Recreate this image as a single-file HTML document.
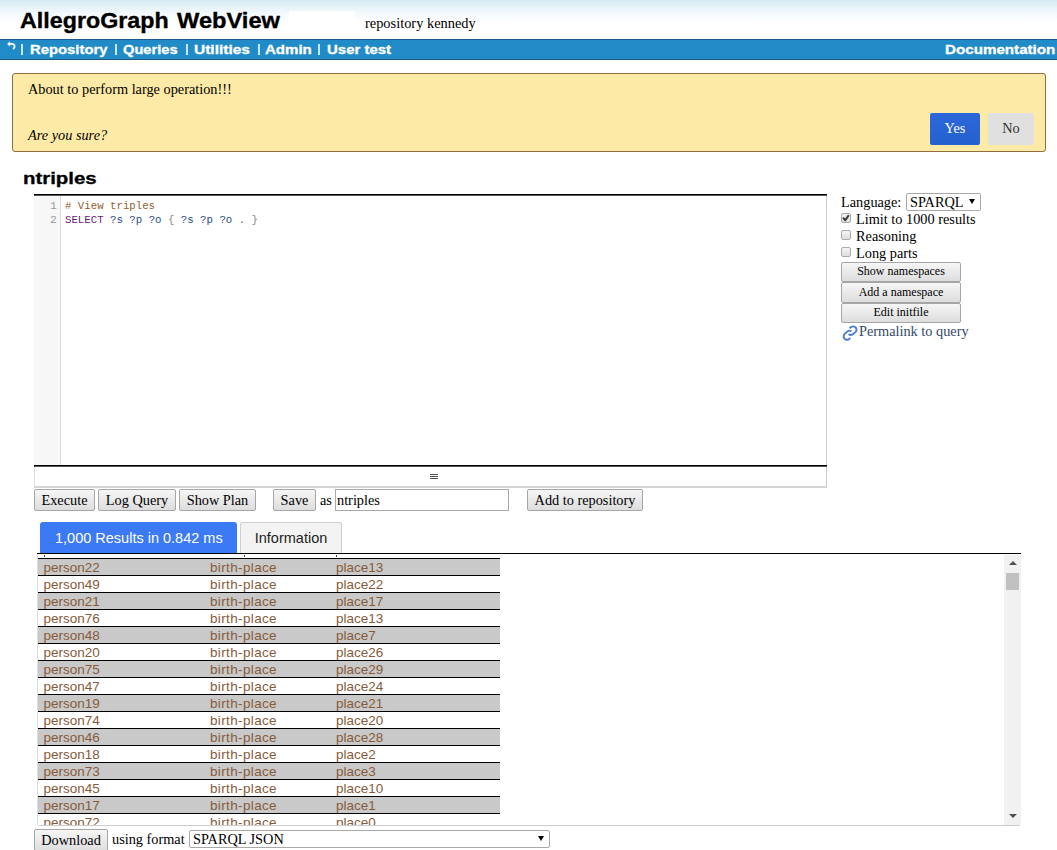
<!DOCTYPE html>
<html><head><meta charset="utf-8">
<style>
*{box-sizing:border-box;margin:0;padding:0}
html,body{width:1057px;height:850px;overflow:hidden;background:#fff;position:relative}
body{font-family:"Liberation Serif",serif;font-size:14.3px;color:#000}
.a{position:absolute;white-space:nowrap}
.sans{font-family:"Liberation Sans",sans-serif}
.mono{font-family:"Liberation Mono",monospace}
#hdr{position:absolute;left:0;top:0;width:1057px;height:39px;background:linear-gradient(#d5e9f3 0px,#e3f1f8 6px,#f5fafd 14px,#fff 22px)}
#nav{position:absolute;left:0;top:39px;width:1057px;height:21px;background:#218bc8;border-top:1px solid #1b5889;border-bottom:1px solid #1b5889}
.nv{position:absolute;top:1px;line-height:19px;font-family:"Liberation Sans",sans-serif;font-weight:bold;font-size:14px;color:#fff;white-space:nowrap;-webkit-text-stroke:0.3px #fff}
#alert{position:absolute;left:12px;top:73px;width:1034px;height:79px;background:#fdeaa6;border:1px solid #8f6e3a;border-radius:3px}
.btn{position:absolute;background:linear-gradient(#f6f6f6,#dddddd);border:1px solid #a6a6a6;border-radius:2px;text-align:center;white-space:nowrap;color:#000}
.chk{position:absolute;width:10px;height:10px;border:1px solid #ababab;border-radius:2px;background:linear-gradient(#f4f4f4,#dedede)}
.row{position:absolute;left:38px;width:462px;height:16px;font-family:"Liberation Sans",sans-serif;font-size:13.5px;color:#875b3a;line-height:16px}
.row span{position:absolute;top:1px}
.ln{position:absolute;left:38px;width:462px;height:1px;background:#000}
</style></head><body>
<div id="hdr"></div>
<div class="a sans" style="left:20px;top:8px;font-weight:bold;font-size:22px;line-height:26px;-webkit-text-stroke:0.35px #000;transform:scaleX(1.058);transform-origin:0 0">AllegroGraph</div><div class="a sans" style="left:176.5px;top:8px;font-weight:bold;font-size:22px;line-height:26px;-webkit-text-stroke:0.35px #000;transform:scaleX(1.075);transform-origin:0 0">WebView</div>
<div class="a" style="left:289px;top:11px;width:66px;height:26px;background:#fff;border-radius:2px"></div>
<div class="a" style="left:365px;top:13.5px;font-size:14.4px;line-height:18px">repository kennedy</div>

<div id="nav">
  <svg class="a" style="left:4px;top:0px" width="14" height="12" viewBox="0 0 14 12"><path d="M3.2 3.9 L5.8 1.2 L5.8 6.6 Z" fill="#fff"/><path d="M5.5 3.9 H7.4 Q10.6 4 10.6 6.2 Q10.6 7.6 9.6 8.6" fill="none" stroke="#fff" stroke-width="1.7" stroke-linecap="round"/></svg>
  <div class="a" style="left:21px;top:4px;width:2px;height:11px;background:#d8f0ff;opacity:.9"></div>
  <div class="a" style="left:114.6px;top:4px;width:2px;height:11px;background:#d8f0ff;opacity:.9"></div>
  <div class="a" style="left:186px;top:4px;width:2px;height:11px;background:#d8f0ff;opacity:.9"></div>
  <div class="a" style="left:258px;top:4px;width:2px;height:11px;background:#d8f0ff;opacity:.9"></div>
  <div class="a" style="left:318px;top:4px;width:2px;height:11px;background:#d8f0ff;opacity:.9"></div>
  <div class="nv" style="left:30.0px;font-size:12.6px;transform:scaleX(1.178);transform-origin:0 0">Repository</div>
  <div class="nv" style="left:123.4px;font-size:12.6px;transform:scaleX(1.164);transform-origin:0 0">Queries</div>
  <div class="nv" style="left:194.0px;font-size:12.6px;transform:scaleX(1.231);transform-origin:0 0">Utilities</div>
  <div class="nv" style="left:265.0px;font-size:12.6px;transform:scaleX(1.195);transform-origin:0 0">Admin</div>
  <div class="nv" style="left:327.0px;font-size:12.6px;transform:scaleX(1.188);transform-origin:0 0">User test</div>
  <div class="nv" style="left:945.4px;font-size:12.6px;transform:scaleX(1.204);transform-origin:0 0">Documentation</div>
</div>

<div id="alert"></div>
<div class="a" style="left:28px;top:80px;font-size:14.3px;line-height:18px">About to perform large operation!!!</div>
<div class="a" style="left:28px;top:126px;font-size:14.3px;line-height:18px;font-style:italic">Are you sure?</div>
<div class="a" style="left:930px;top:113px;width:50px;height:32px;background:linear-gradient(#2c68da,#2560d0);border-radius:2px;color:#fff;font-size:14.3px;line-height:30px;text-align:center">Yes</div>
<div class="a" style="left:988px;top:113px;width:46px;height:32px;background:#e0e0e0;border-radius:2px;color:#333;font-size:14.3px;line-height:30px;text-align:center">No</div>

<div class="a sans" style="left:22.5px;top:168px;font-weight:bold;font-size:16.5px;line-height:20px;transform:scaleX(1.235);transform-origin:0 0;-webkit-text-stroke:0.3px #000">ntriples</div>

<!-- editor -->
<div class="a" style="left:34px;top:194px;width:793px;height:294px;border-right:1px solid #c8c8c8;border-left:1px solid #ddd"></div>
<div class="a" style="left:34px;top:194px;width:793px;height:1px;background:#000"></div>
<div class="a" style="left:34px;top:195px;width:793px;height:1px;background:#555"></div>
<div class="a" style="left:34px;top:196px;width:27px;height:269px;background:#f7f7f7;border-right:1px solid #ddd"></div>
<div class="a" style="left:34px;top:465px;width:793px;height:1px;background:#000"></div>
<div class="a" style="left:34px;top:466px;width:793px;height:1px;background:#555"></div>
<div class="a" style="left:34px;top:486px;width:793px;height:2px;background:#d4d4d4"></div>
<div class="a" style="left:430px;top:474px;width:8px;height:1px;background:#555"></div>
<div class="a" style="left:430px;top:476px;width:8px;height:1px;background:#555"></div>
<div class="a" style="left:430px;top:478px;width:8px;height:1px;background:#555"></div>
<div class="a mono" style="left:34px;top:199px;width:23px;text-align:right;font-size:11.5px;line-height:14px;color:#999">1<br>2</div>
<div class="a mono" style="left:64.6px;top:199px;font-size:11.5px;line-height:14px;transform:scaleX(0.932);transform-origin:0 0"><span style="color:#94602e">#&nbsp;View&nbsp;triples</span><br><span style="color:#6a1b7a">SELECT</span> <span style="color:#2b4c8c">?s ?p ?o</span> <span style="color:#888">{</span> <span style="color:#2b4c8c">?s ?p ?o</span> <span style="color:#666">.</span> <span style="color:#888">}</span></div>

<!-- right panel -->
<div class="a" style="left:841px;top:194px;line-height:16px">Language:</div>
<div class="a" style="left:906px;top:193px;width:75px;height:18px;border:1px solid #a9a9a9;border-radius:2px;background:#fff"></div>
<div class="a" style="left:910px;top:194px;line-height:16px">SPARQL</div>
<div class="a" style="left:969px;top:199px;width:0;height:0;border-left:3px solid transparent;border-right:3px solid transparent;border-top:5px solid #000"></div>
<div class="chk" style="left:841px;top:213px"></div>
<svg class="a" style="left:841px;top:213px" width="10" height="10" viewBox="0 0 10 10"><path d="M2.5 5.3 L4.3 7.2 L7.3 2.9" fill="none" stroke="#3a3a3a" stroke-width="2" stroke-linecap="round" stroke-linejoin="round"/></svg>
<div class="a" style="left:856px;top:211px;line-height:16px">Limit to 1000 results</div>
<div class="chk" style="left:841px;top:230px"></div>
<div class="a" style="left:856px;top:228px;line-height:16px">Reasoning</div>
<div class="chk" style="left:841px;top:247px"></div>
<div class="a" style="left:856px;top:245px;line-height:16px">Long parts</div>
<div class="btn" style="left:841px;top:262px;width:120px;height:20px;font-size:12px;line-height:17px">Show namespaces</div>
<div class="btn" style="left:841px;top:282px;width:120px;height:21px;font-size:12px;line-height:19px">Add a namespace</div>
<div class="btn" style="left:841px;top:303px;width:120px;height:20px;font-size:12px;line-height:17px">Edit initfile</div>
<svg class="a" style="left:840px;top:323px" width="20" height="20" viewBox="0 0 20 20"><g fill="none" stroke="#4f7fd2" stroke-width="1.9" stroke-linecap="butt"><path d="M9.6 5.3 L11.3 3.9 Q13.4 2.7 15.6 4.4 Q17.3 6.6 15.9 8.6 L12.6 11.4 Q10.5 12.7 8.6 11.0"/><path d="M11.4 8.4 Q9.5 6.9 7.4 8.4 L4.4 11.2 Q2.8 13.5 4.5 15.8 Q6.7 17.6 9.0 16.1 L10.3 14.9"/></g></svg>
<div class="a" style="left:859px;top:323.3px;line-height:16px;color:#34486a">Permalink to query</div>

<!-- buttons row -->
<div class="btn" style="left:34px;top:489px;width:61px;height:22px;line-height:20px">Execute</div>
<div class="btn" style="left:98px;top:489px;width:78px;height:22px;line-height:20px">Log Query</div>
<div class="btn" style="left:179px;top:489px;width:77px;height:22px;line-height:20px">Show Plan</div>
<div class="btn" style="left:273px;top:489px;width:43px;height:22px;line-height:20px">Save</div>
<div class="a" style="left:320px;top:492px;line-height:16px">as</div>
<div class="a" style="left:335px;top:489px;width:174px;height:22px;border:1px solid #a9a9a9;background:#fff;padding-left:1px;line-height:20px">ntriples</div>
<div class="btn" style="left:527px;top:489px;width:116px;height:22px;line-height:20px">Add to repository</div>

<!-- tabs -->
<div class="a sans" style="left:40px;top:522px;width:197px;height:32px;background:#3b7af4;border-radius:3px 3px 0 0;color:#fff;font-size:14.5px;line-height:32px;padding-left:15px">1,000 Results in 0.842 ms</div>
<div class="a sans" style="left:240px;top:522px;width:102px;height:32px;background:#f3f3f3;border:1px solid #d0d0d0;border-bottom:none;border-radius:3px 3px 0 0;color:#222;font-size:14.5px;line-height:31px;text-align:center">Information</div>
<div class="a" style="left:37px;top:553px;width:984px;height:1px;background:#000"></div>

<!-- results container -->
<div class="a" style="left:37px;top:554px;width:984px;height:272px;border-left:1px solid #ddd;border-bottom:1px solid #ccc;border-radius:0 0 3px 3px;overflow:hidden" id="res">
</div>
<div class="a" style="left:37px;top:554px;width:967px;height:271px;overflow:hidden">
<div class="a" style="left:7px;top:1px;width:1px;height:2px;background:#444"></div>
<div class="a" style="left:207px;top:1px;width:1px;height:2px;background:#444"></div>
<div class="a" style="left:299px;top:1px;width:1px;height:2px;background:#444"></div>
<div class="a" style="left:1px;top:4px;width:462px;height:1px;background:#000"></div>
<div class="row" style="left:1px;top:5px;background:#c9c9c9"><span style="left:5.5px">person22</span><span style="left:172px;letter-spacing:0.36px">birth-place</span><span style="left:298px">place13</span></div>
<div class="a" style="left:1px;top:21px;width:462px;height:1px;background:#000"></div>
<div class="row" style="left:1px;top:22px;background:#fff"><span style="left:5.5px">person49</span><span style="left:172px;letter-spacing:0.36px">birth-place</span><span style="left:298px">place22</span></div>
<div class="a" style="left:1px;top:38px;width:462px;height:1px;background:#000"></div>
<div class="row" style="left:1px;top:39px;background:#c9c9c9"><span style="left:5.5px">person21</span><span style="left:172px;letter-spacing:0.36px">birth-place</span><span style="left:298px">place17</span></div>
<div class="a" style="left:1px;top:55px;width:462px;height:1px;background:#000"></div>
<div class="row" style="left:1px;top:56px;background:#fff"><span style="left:5.5px">person76</span><span style="left:172px;letter-spacing:0.36px">birth-place</span><span style="left:298px">place13</span></div>
<div class="a" style="left:1px;top:72px;width:462px;height:1px;background:#000"></div>
<div class="row" style="left:1px;top:73px;background:#c9c9c9"><span style="left:5.5px">person48</span><span style="left:172px;letter-spacing:0.36px">birth-place</span><span style="left:298px">place7</span></div>
<div class="a" style="left:1px;top:89px;width:462px;height:1px;background:#000"></div>
<div class="row" style="left:1px;top:90px;background:#fff"><span style="left:5.5px">person20</span><span style="left:172px;letter-spacing:0.36px">birth-place</span><span style="left:298px">place26</span></div>
<div class="a" style="left:1px;top:106px;width:462px;height:1px;background:#000"></div>
<div class="row" style="left:1px;top:107px;background:#c9c9c9"><span style="left:5.5px">person75</span><span style="left:172px;letter-spacing:0.36px">birth-place</span><span style="left:298px">place29</span></div>
<div class="a" style="left:1px;top:123px;width:462px;height:1px;background:#000"></div>
<div class="row" style="left:1px;top:124px;background:#fff"><span style="left:5.5px">person47</span><span style="left:172px;letter-spacing:0.36px">birth-place</span><span style="left:298px">place24</span></div>
<div class="a" style="left:1px;top:140px;width:462px;height:1px;background:#000"></div>
<div class="row" style="left:1px;top:141px;background:#c9c9c9"><span style="left:5.5px">person19</span><span style="left:172px;letter-spacing:0.36px">birth-place</span><span style="left:298px">place21</span></div>
<div class="a" style="left:1px;top:157px;width:462px;height:1px;background:#000"></div>
<div class="row" style="left:1px;top:158px;background:#fff"><span style="left:5.5px">person74</span><span style="left:172px;letter-spacing:0.36px">birth-place</span><span style="left:298px">place20</span></div>
<div class="a" style="left:1px;top:174px;width:462px;height:1px;background:#000"></div>
<div class="row" style="left:1px;top:175px;background:#c9c9c9"><span style="left:5.5px">person46</span><span style="left:172px;letter-spacing:0.36px">birth-place</span><span style="left:298px">place28</span></div>
<div class="a" style="left:1px;top:191px;width:462px;height:1px;background:#000"></div>
<div class="row" style="left:1px;top:192px;background:#fff"><span style="left:5.5px">person18</span><span style="left:172px;letter-spacing:0.36px">birth-place</span><span style="left:298px">place2</span></div>
<div class="a" style="left:1px;top:208px;width:462px;height:1px;background:#000"></div>
<div class="row" style="left:1px;top:209px;background:#c9c9c9"><span style="left:5.5px">person73</span><span style="left:172px;letter-spacing:0.36px">birth-place</span><span style="left:298px">place3</span></div>
<div class="a" style="left:1px;top:225px;width:462px;height:1px;background:#000"></div>
<div class="row" style="left:1px;top:226px;background:#fff"><span style="left:5.5px">person45</span><span style="left:172px;letter-spacing:0.36px">birth-place</span><span style="left:298px">place10</span></div>
<div class="a" style="left:1px;top:242px;width:462px;height:1px;background:#000"></div>
<div class="row" style="left:1px;top:243px;background:#c9c9c9"><span style="left:5.5px">person17</span><span style="left:172px;letter-spacing:0.36px">birth-place</span><span style="left:298px">place1</span></div>
<div class="a" style="left:1px;top:259px;width:462px;height:1px;background:#000"></div>
<div class="row" style="left:1px;top:260px;background:#fff"><span style="left:5.5px">person72</span><span style="left:172px;letter-spacing:0.36px">birth-place</span><span style="left:298px">place0</span></div>
</div>

<!-- scrollbar -->
<div class="a" style="left:1004px;top:555px;width:17px;height:270px;background:#f1f1f1"></div>
<div class="a" style="left:1009px;top:561px;width:0;height:0;border-left:4px solid transparent;border-right:4px solid transparent;border-bottom:4px solid #505050"></div>
<div class="a" style="left:1006px;top:573px;width:13px;height:17px;background:#c1c1c1"></div>
<div class="a" style="left:1009px;top:814px;width:0;height:0;border-left:4px solid transparent;border-right:4px solid transparent;border-top:4px solid #505050"></div>

<!-- bottom -->
<div class="btn" style="left:34px;top:829px;width:74px;height:24px;line-height:20px">Download</div>
<div class="a" style="left:112px;top:831px;line-height:16px">using format</div>
<div class="a" style="left:189px;top:830px;width:361px;height:18px;border:1px solid #a9a9a9;border-radius:2px;background:#fff"></div>
<div class="a" style="left:193px;top:831px;line-height:16px">SPARQL JSON</div>
<div class="a" style="left:538px;top:836px;width:0;height:0;border-left:3px solid transparent;border-right:3px solid transparent;border-top:5px solid #000"></div>
</body></html>
